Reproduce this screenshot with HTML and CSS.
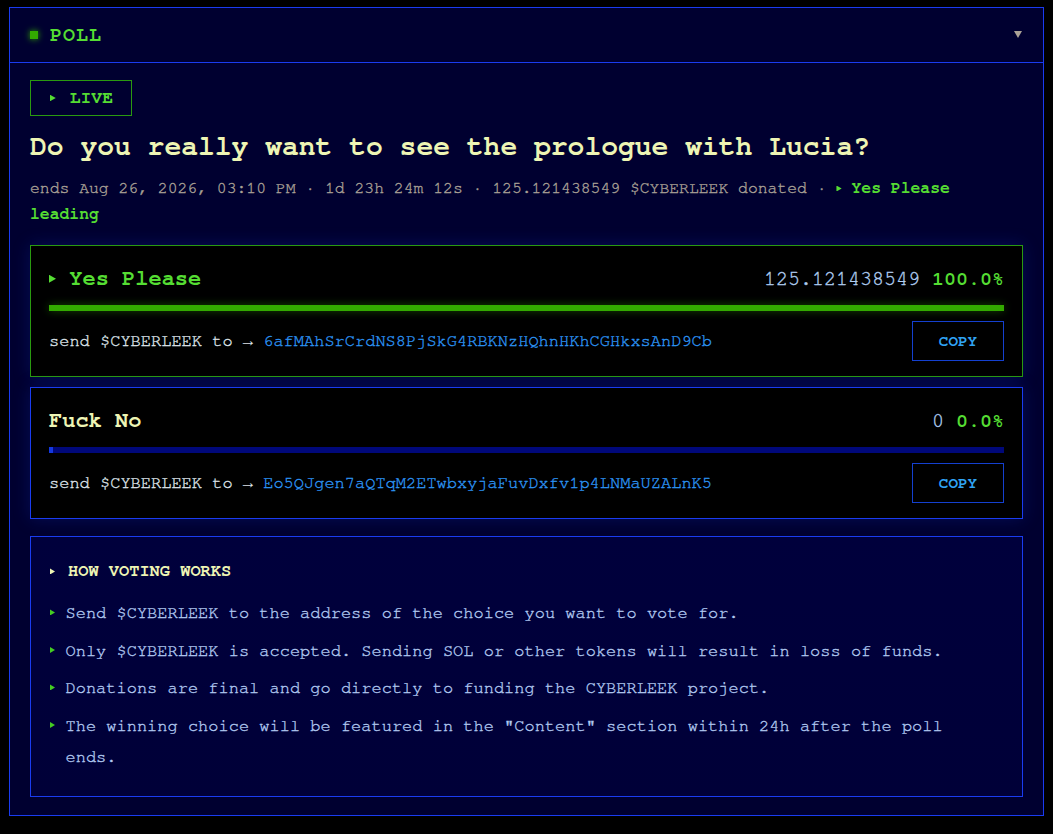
FILE: index.html
```html
<!DOCTYPE html>
<html lang="en">
  <head>
    <meta charset="UTF-8" />
    <meta name="viewport" content="width=device-width, initial-scale=1.0" />
    <title>Poll - CYBERLEEK</title>
    <link rel="stylesheet" href="styles.css">
  </head>
  <body>
    <section class="panel">
      <header class="panel-header">
        <h2 class="panel-title"><span class="status-dot"></span>POLL</h2>
        <span class="caret"></span>
      </header>

      <div class="panel-body">
        <div class="live-badge"><span class="tri"></span>LIVE</div>

        <h1 class="question">Do you really want to see the prologue with Lucia?</h1>
        <p class="meta">
          ends Aug 26, 2026, 03:10 PM · 1d 23h 24m 12s · 125.121438549 $CYBERLEEK donated · <b class="leader"><span class="tri"></span> Yes Please</b> <b class="leader">leading</b>
        </p>

        <div class="option option-leading">
          <div class="option-head">
            <span class="option-name"><span class="tri"></span> Yes Please</span>
            <span class="option-stats">125.121438549 <b class="pct">100.0%</b></span>
          </div>
          <div class="bar"><div class="bar-fill" style="width: 100%"></div></div>
          <div class="send-row">
            <span class="send-text">send $CYBERLEEK to <span class="arrow">→</span> <span class="address">6afMAhSrCrdNS8PjSkG4RBKNzHQhnHKhCGHkxsAnD9Cb</span></span>
            <button class="copy-btn" type="button">COPY</button>
          </div>
        </div>

        <div class="option">
          <div class="option-head">
            <span class="option-name">Fuck No</span>
            <span class="option-stats">0 <b class="pct">0.0%</b></span>
          </div>
          <div class="bar"><div class="bar-fill" style="width: 0%"></div></div>
          <div class="send-row">
            <span class="send-text">send $CYBERLEEK to <span class="arrow">→</span> <span class="address">Eo5QJgen7aQTqM2ETwbxyjaFuvDxfv1p4LNMaUZALnK5</span></span>
            <button class="copy-btn" type="button">COPY</button>
          </div>
        </div>

        <div class="how-box">
          <h3 class="how-title"><span class="tri"></span>HOW VOTING WORKS</h3>
          <ul class="how-list">
            <li>Send $CYBERLEEK to the address of the choice you want to vote for.</li>
            <li>Only $CYBERLEEK is accepted. Sending SOL or other tokens will result in loss of funds.</li>
            <li>Donations are final and go directly to funding the CYBERLEEK project.</li>
            <li>The winning choice will be featured in the "Content" section within 24h after the poll ends.</li>
          </ul>
        </div>
      </div>
    </section>
  </body>
</html>
```

FILE: styles.css
```css
:root {
  --bg-page: #000000;
  --bg-panel: #000030;
  --bg-card: #000000;
  --line-blue: #1a3cf0;
  --line-green: #2a9a10;
  --green: #55dd33;
  --green-solid: #33aa00;
  --cream: #eef5b4;
  --muted: #aaa196;
  --steel: #b0cef2;
  --link: #2c94f4;
}

* {
  margin: 0;
  padding: 0;
  box-sizing: border-box;
}

body {
  font-family: "Nimbus Mono PS", "Nimbus Mono L", FreeMono, Courier, "Courier New", "Liberation Mono", monospace;
  background-color: var(--bg-page);
  background-image: radial-gradient(rgba(255, 255, 255, 0.07) 1px, transparent 1.5px);
  background-size: 60px 60px;
  background-position: 7px 3px;
  color: var(--cream);
  padding: 7px 9px;
  min-height: 100vh;
}

/* the mono face is thin at these sizes, thicken the regular weight a touch */
.meta,
.option-stats,
.send-text,
.how-list li {
  -webkit-text-stroke: 0.35px currentColor;
}

.panel {
  border: 1px solid var(--line-blue);
  background: var(--bg-panel);
}

/* header strip */
.panel-header {
  display: flex;
  align-items: center;
  justify-content: space-between;
  height: 55px;
  padding: 0 21px 0 20px;
  border-bottom: 1px solid var(--line-blue);
}

.panel-title {
  display: flex;
  align-items: center;
  gap: 12px;
  font-size: 20px;
  font-weight: 700;
  letter-spacing: 1px;
  color: var(--green);
}

.status-dot {
  width: 8px;
  height: 8px;
  background: var(--green-solid);
  box-shadow: 0 0 6px var(--green-solid);
}

.caret {
  width: 0;
  height: 0;
  border-left: 4px solid transparent;
  border-right: 4px solid transparent;
  border-top: 7px solid var(--muted);
  margin-top: -1px;
}

.tri {
  display: inline-block;
  width: 0.32em;
  height: 0.36em;
  background: currentColor;
  clip-path: polygon(0 0, 100% 50%, 0 100%);
  vertical-align: 0.12em;
}

.panel-body {
  padding: 17px 20px 18px;
}

.live-badge {
  display: flex;
  align-items: center;
  gap: 14px;
  width: fit-content;
  height: 36px;
  padding: 0 18px 0 19px;
  border: 1px solid var(--line-green);
  color: var(--green);
  font-size: 18px;
  font-weight: 700;
}

.live-badge .tri {
  vertical-align: 0;
}

.question {
  margin-top: 13px;
  font-size: 28px;
  line-height: 1.3;
  font-weight: 700;
  color: var(--cream);
}

.meta {
  margin-top: 10px;
  font-size: 16.4px;
  line-height: 26px;
  color: var(--muted);
}

.leader {
  color: var(--green);
  -webkit-text-stroke: 0;
}

/* answer cards */
.option {
  margin-top: 10px;
  padding: 18px 18px 15px;
  background: var(--bg-card);
  border: 1px solid var(--line-blue);
  box-shadow: 0 0 16px rgba(20, 50, 200, 0.25);
}

.option-leading {
  margin-top: 18px;
  border-color: var(--line-green);
}

.option-head {
  display: flex;
  align-items: baseline;
  justify-content: space-between;
  line-height: 28px;
}

.option-name {
  font-size: 22px;
  font-weight: 700;
  color: var(--cream);
}

.option-leading .option-name {
  color: var(--green);
}

.option-stats {
  font-size: 20px;
  color: var(--steel);
}

.pct {
  color: var(--green);
  -webkit-text-stroke: 0;
}

.bar {
  margin-top: 12px;
  height: 6px;
  background: #00087a;
}

.bar-fill {
  height: 100%;
  min-width: 4px;
  background: #1438e0;
}

.option-leading .bar-fill {
  background: var(--green-solid);
  box-shadow: 0 0 8px rgba(51, 170, 0, 0.45);
}

.send-row {
  display: flex;
  align-items: center;
  justify-content: space-between;
  margin-top: 10px;
}

.send-text {
  font-size: 17px;
  color: #dde2e8;
}

.arrow {
  font-family: "Liberation Mono", monospace;
  -webkit-text-stroke: 0;
}

.address {
  color: var(--link);
}

.copy-btn {
  width: 92px;
  height: 40px;
  background: transparent;
  border: 1px solid #1440d0;
  color: #30a4f4;
  font-family: inherit;
  font-size: 16px;
  font-weight: 700;
  cursor: pointer;
}

/* explainer box */
.how-box {
  margin-top: 17px;
  padding: 24px 30px 24px 19px;
  border: 1px solid var(--line-blue);
  background: linear-gradient(#00003c, #000038);
}

.how-title {
  display: flex;
  align-items: center;
  gap: 13px;
  font-size: 17px;
  line-height: 20px;
  font-weight: 700;
  color: var(--cream);
}

.how-title .tri {
  width: 5px;
  height: 6px;
}

.how-list {
  list-style: none;
  display: flex;
  flex-direction: column;
  gap: 6.5px;
  margin-top: 16px;
}

.how-list li {
  display: flex;
  gap: 10.5px;
  font-size: 17px;
  line-height: 31px;
  color: #b0c8f0;
}

.how-list li::before {
  content: "";
  flex: none;
  width: 5px;
  height: 6px;
  margin-top: 12px;
  background: #44cc22;
  clip-path: polygon(0 0, 100% 50%, 0 100%);
}
```
